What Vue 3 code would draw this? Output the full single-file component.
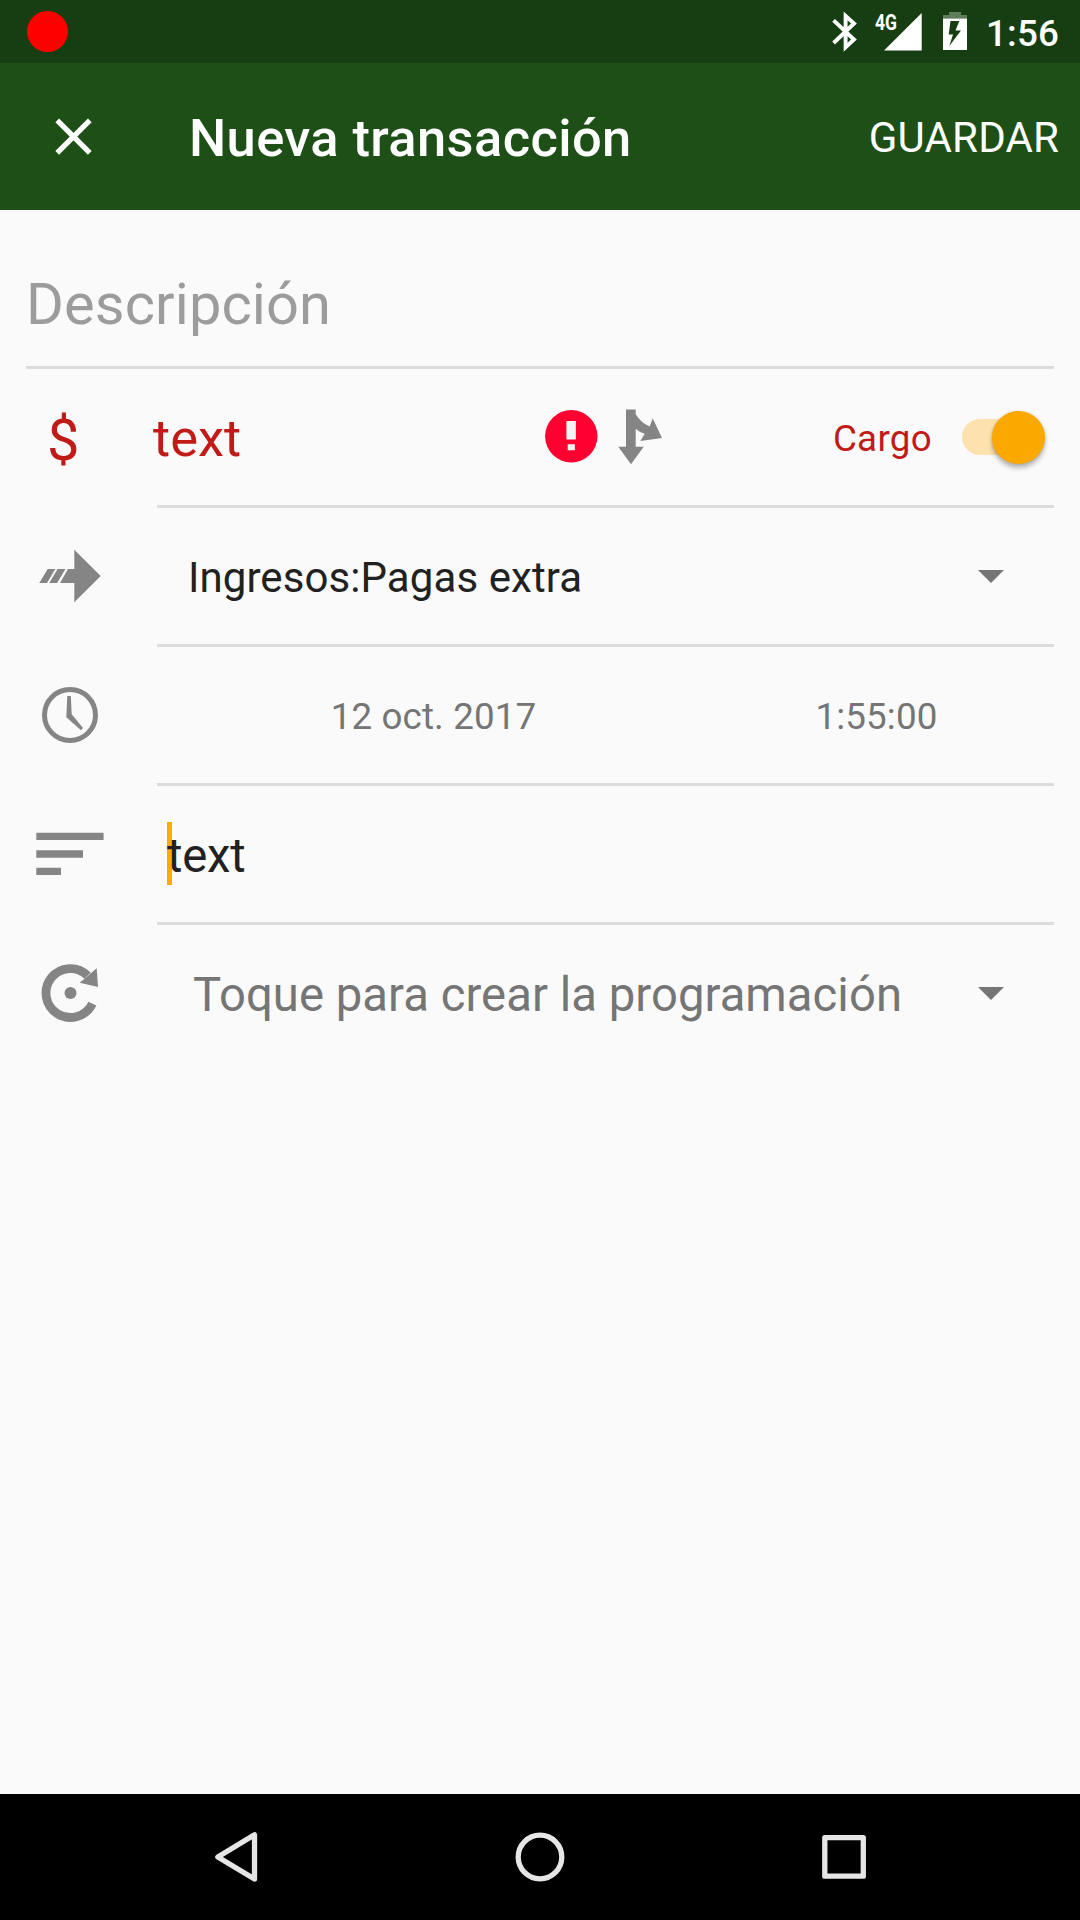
<script setup>
const form = {
  title: 'Nueva transacción',
  description: 'Descripción',
  currency: '$',
  amount: 'text',
  type: 'Cargo',
  account: 'Ingresos:Pagas extra',
  date: '12 oct. 2017',
  time: '1:55:00',
  notes: 'text',
  schedule: 'Toque para crear la programación'
}
</script>

<template>
  <div class="screen">
    <header class="status">
      <span class="record"></span>
      <svg class="status-icons" width="150" height="63" viewBox="825 0 150 63">
        <path d="M833.6 20.300 854 39.500 845.600 47.300V15.900L854 23.500 833.600 43" fill="none" stroke="#fff" stroke-width="3.900" />
        <path d="M921.700 13V50.600H884z" fill="#fff" />
        <path d="M949 12h12v3h6v3.600h-24V15h6z" fill="#5f7c5b" />
        <path fill-rule="evenodd" d="M943 18.600h24V50h-24zM950.500 21 948.700 34.500h4.300L949.300 46 961 30.500h-5.500L959.300 21z" fill="#fff" />
        <text x="875" y="30" class="net" textLength="22" lengthAdjust="spacingAndGlyphs">4G</text>
      </svg>
      <span class="clock">1:56</span>
    </header>

    <div class="appbar">
      <svg class="close" width="189" height="147" viewBox="0 63 189 147">
        <path d="M57.200 120.300 89.800 152.900M89.800 120.300 57.200 152.900" stroke="#fff" stroke-width="5.300" />
      </svg>
      <h1>{{ form.title }}</h1>
      <span class="save">GUARDAR</span>
    </div>

    <main>
      <div class="description"><span>{{ form.description }}</span></div>

      <div class="row">
        <div class="lead currency"><span>{{ form.currency }}</span></div>
        <div class="cell">
          <span class="amount">{{ form.amount }}</span>
          <svg width="70" height="136" viewBox="540 369 70 136">
            <circle cx="571.300" cy="436.300" r="26.200" fill="#ff0030" />
            <path d="M566.400 421h9.500v18.500h-9.500zM567.700 444.300h7.200v6h-7.200z" fill="#f2f2f2" />
          </svg>
          <svg width="60" height="136" viewBox="610 369 60 136">
            <path class="glyph" d="M626 409.500h9.700v4.800Q641 423 649.700 426.500L652.700 418.300 662 438 640.300 441 644.700 433.700Q639 432 635.700 428.700V446.700H643.700L631 464.300 618.300 446.700H626z" />
          </svg>
          <span class="type">{{ form.type }}</span>
          <span class="toggle"><i></i></span>
        </div>
      </div>

      <div class="row">
        <svg class="lead" viewBox="0 0 157 136">
          <path class="glyph" d="M74.300 41.700 100.700 68 74.300 94.300V75H60L68 61h6.300zM47.700 61h7.600L47 75h-7.700zM57.600 61h7.900L57.100 75H49.300z" />
        </svg>
        <div class="cell">
          <span class="account">{{ form.account }}</span>
          <svg class="caret" width="26" height="13" viewBox="0 0 26 13"><path d="M0 0h26L13 13z" /></svg>
        </div>
      </div>

      <div class="row">
        <svg class="lead" viewBox="0 0 157 136">
          <circle cx="70" cy="68" r="25.500" fill="none" stroke="#858585" stroke-width="5" />
          <path class="glyph" d="M67.300 49h3.500L71.700 67.300 83 81 81 83.200 66.300 70.300z" />
        </svg>
        <div class="cell">
          <span class="date">{{ form.date }}</span>
          <span class="time">{{ form.time }}</span>
        </div>
      </div>

      <div class="row">
        <svg class="lead" viewBox="0 0 157 136">
          <path class="glyph" d="M36.300 46.700H103.600V54H36.300zM36.300 64.200H83v7.500H36.300zM36.300 81.700H61V89H36.300z" />
        </svg>
        <div class="cell">
          <span class="notes">{{ form.notes }}</span>
        </div>
      </div>

      <div class="row last">
        <svg class="lead" viewBox="0 0 157 136">
          <path d="M87.600 50.700A24.400 24.400 0 1 0 92.400 78.600" fill="none" stroke="#858585" stroke-width="8.800" />
          <path class="glyph" d="M96.700 43.300 98 62 79.700 57.700z" />
          <circle class="glyph" cx="70.500" cy="68" r="6" />
        </svg>
        <div class="cell">
          <span class="schedule">{{ form.schedule }}</span>
          <svg class="caret" width="26" height="13" viewBox="0 0 26 13"><path d="M0 0h26L13 13z" /></svg>
        </div>
      </div>
    </main>

    <nav>
      <svg width="1080" height="126" viewBox="0 1794 1080 126" fill="none" stroke="#e6e6e6" stroke-width="5.300" stroke-linejoin="round">
        <path d="M254.500 1834.800V1879L217.800 1857z" />
        <circle cx="540" cy="1857" r="21.800" />
        <rect x="824.800" y="1837.700" width="38.500" height="38.500" />
      </svg>
    </nav>
  </div>
</template>

<style>
body {
  background: #fafafa;
}
</style>

<style scoped>
.screen {
  width: 1080px;
  height: 1920px;
  display: flex;
  flex-direction: column;
  background: #fafafa;
  font-family: Roboto, sans-serif;
  overflow: hidden;
}
svg {
  display: block;
  flex: none;
}
span,
h1 {
  white-space: nowrap;
}
.status {
  height: 63px;
  display: flex;
  align-items: center;
  background: #163e12;
  color: #fff;
}
.record {
  width: 41px;
  height: 41px;
  margin-left: 27px;
  border-radius: 50%;
  background: #f00;
}
.status-icons {
  margin-left: auto;
}
.net {
  font-size: 22px;
  font-weight: 700;
  fill: #fff;
}
.clock {
  width: 84px;
  margin-right: 21px;
  padding-top: 4px;
  text-align: right;
  font-size: 36.75px;
  font-weight: 500;
  letter-spacing: 0.15px;
}
.appbar {
  height: 147px;
  display: flex;
  align-items: center;
  background: #1d4f17;
  color: #fff;
}
h1 {
  margin: 0;
  padding-top: 3px;
  font-size: 52.5px;
  font-weight: 500;
  letter-spacing: 0.37px;
}
.save {
  margin-left: auto;
  margin-right: 21px;
  padding-top: 2px;
  font-size: 42px;
  letter-spacing: 0.15px;
}
main {
  flex: 1;
}
.description {
  height: 156px;
  margin: 0 26px;
  display: flex;
  align-items: center;
  border-bottom: 3px solid #dcdcdc;
  color: #9c9c9c;
  font-size: 57.75px;
  letter-spacing: 0.12px;
}
.description span {
  padding-top: 32px;
}
.row {
  height: 139px;
  display: flex;
}
.lead {
  width: 157px;
  height: 136px;
  flex: none;
}
.glyph {
  fill: #858585;
}
.currency {
  box-sizing: border-box;
  display: flex;
  align-items: center;
  padding: 5px 0 0 47px;
  color: #c11b17;
  font-size: 57.75px;
}
.cell {
  box-sizing: border-box;
  width: 897px;
  height: 139px;
  display: flex;
  align-items: center;
  border-bottom: 3px solid #dcdcdc;
}
.last .cell {
  border-bottom-color: transparent;
}
.cell span {
  padding-top: 3px;
}
.cell .amount {
  width: 387px;
  margin-left: -4px;
  padding-top: 2px;
  color: #c11b17;
  font-size: 52.5px;
}
.type {
  margin-left: auto;
  color: #c11b17;
  font-size: 36.75px;
  letter-spacing: 0.3px;
}
.cell .toggle {
  box-sizing: border-box;
  width: 75px;
  height: 36px;
  margin: 0 17px 0 30px;
  padding: 0;
  display: flex;
  align-items: center;
  border-radius: 18px;
  background: #fde2b0;
}
.toggle i {
  width: 53px;
  height: 53px;
  flex: none;
  margin: 0 0 0 30px;
  border-radius: 50%;
  background: #fba800;
  box-shadow: 0 4px 5px rgba(0, 0, 0, 0.28), 0 0 3px rgba(0, 0, 0, 0.12);
}
.account {
  margin-left: 31px;
  color: #212121;
  font-size: 42px;
  letter-spacing: 0.08px;
}
.caret {
  margin-left: auto;
  margin-right: 50px;
  fill: #757575;
}
.date,
.time {
  color: #757575;
  font-size: 36.75px;
  letter-spacing: 0.12px;
}
.date {
  width: 553px;
  text-align: center;
}
.time {
  width: 333px;
  text-align: center;
}
.cell .notes {
  height: 63px;
  line-height: 68px;
  margin-left: 10px;
  margin-top: -1px;
  padding: 0;
  background: linear-gradient(#ffab00, #ffab00) 0 0 / 5px 100% no-repeat;
  color: #212121;
  font-size: 47.25px;
  letter-spacing: -0.2px;
}
.cell .schedule {
  margin-left: 36px;
  padding-top: 4px;
  color: #757575;
  font-size: 47.25px;
  letter-spacing: 0.04px;
}
nav {
  height: 126px;
  background: #000;
}
</style>
